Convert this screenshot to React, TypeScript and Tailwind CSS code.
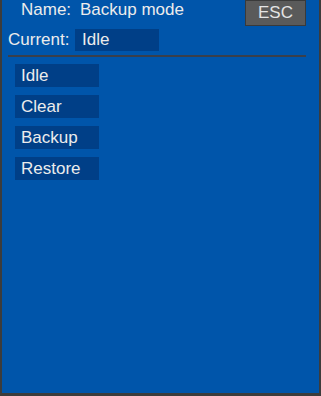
const modes = ['Idle', 'Clear', 'Backup', 'Restore'];

export default function App() {
  return (
    <div
      className="w-[321px] h-[396px] bg-[#0055aa] border-l-2 border-r-2 border-b-[3px] border-[#3c3c3c] text-[#ececec] text-[17px] leading-[20px] flex flex-col"
      style={{ fontFamily: '"Liberation Sans", Arial, sans-serif' }}
    >
      {/* Header */}
      <div className="flex h-[26px]">
        <div className="flex pl-[19px] flex-1">
          <span className="w-[59px]">Name:</span>
          <span>Backup mode</span>
        </div>
        <button className="w-[61px] h-[26px] mr-[13px] bg-[#5a5a5a] border border-[#3a3a3a] text-[#e4e4e4] text-[17px] flex items-center justify-center">
          ESC
        </button>
      </div>

      {/* Current */}
      <div className="flex items-center h-[22px] mt-[3px] pl-[6px]">
        <span className="w-[67px]">Current:</span>
        <div className="w-[84px] h-[22px] bg-[#003f87] flex items-center pl-[7px]">Idle</div>
      </div>

      <div className="h-[2px] bg-[#3a3f4a] ml-[6px] mr-[13px] mt-[4px]" />

      {/* Modes */}
      <div className="flex flex-col gap-[8px] mt-[7px] pl-[13px]">
        {modes.map((m) => (
          <div key={m} className="w-[84px] h-[23px] bg-[#003f87] flex items-center pl-[6px]">
            {m}
          </div>
        ))}
      </div>
    </div>
  );
}
